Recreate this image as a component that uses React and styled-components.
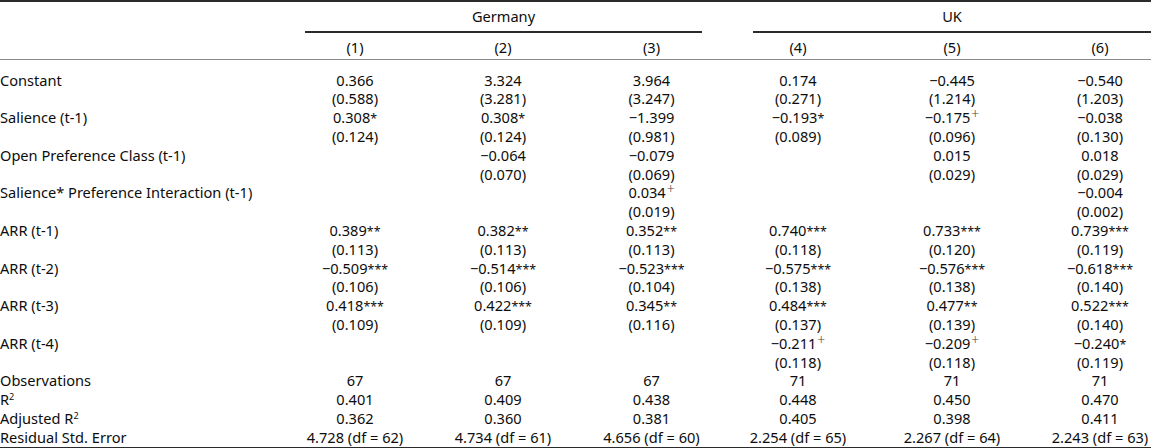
import React from 'react';
import styled, { createGlobalStyle } from 'styled-components';

const GlobalStyle = createGlobalStyle`
  html, body {
    margin: 0;
    padding: 0;
    background: #ffffff;
    overflow: hidden;
  }
  body {
    font-family: "Noto Sans", "Open Sans", sans-serif;
    font-size: 14.6px;
    color: #0d0d0d;
  }
`;

const COLS = '281px 148px 148px 149px 144px 164px 132px';
const LINE = 18.8;

const Table = styled.div`
  width: 1166px;
  border-top: 2px solid #2b2b2b;
  border-bottom: 2px solid #2b2b2b;
`;

const Row = styled.div`
  display: grid;
  grid-template-columns: ${COLS};
  line-height: ${LINE}px;
`;

const GroupRow = styled(Row)`
  padding-top: 5px;
`;

const NumberRow = styled(Row)`
  padding-top: 5px;
  padding-bottom: 2px;
  border-bottom: 1px solid #8a8a8a;
`;

const Body = styled.div`
  padding-top: 11px;
`;

const Group = styled.div`
  grid-column: ${(p) => p.$span};
  margin: 0 ${(p) => p.$right}px 0 ${(p) => p.$left}px;
  padding-bottom: 5px;
  border-bottom: 2px solid #2b2b2b;
  text-align: center;
`;

const Label = styled.div`
  height: ${LINE}px;
  white-space: nowrap;
`;

const Cell = styled.div`
  display: flex;
  flex-direction: column;
  align-items: center;
`;

const Line = styled.div`
  height: ${LINE}px;
  white-space: nowrap;
`;

const Stars = styled.span`
  font-size: 0.85em;
  line-height: 0;
`;

const Plus = styled.span`
  font-size: 0.95em;
  font-weight: 300;
  color: #444;
  line-height: 0;
  position: relative;
  top: -0.3em;
  margin-left: 1px;
`;

const Sq = styled.span`
  font-size: 0.62em;
  line-height: 0;
  position: relative;
  top: -0.6em;
`;

function Coef({ value }) {
  const [, num, stars, plus] = value.match(/^([^*+]+)(\**)(\+?)$/);
  return (
    <Line>
      {num}
      {stars && <Stars>{stars}</Stars>}
      {plus && <Plus>+</Plus>}
    </Line>
  );
}

const coefRows = [
  { label: 'Constant', cells: [['0.366', '(0.588)'], ['3.324', '(3.281)'], ['3.964', '(3.247)'], ['0.174', '(0.271)'], ['−0.445', '(1.214)'], ['−0.540', '(1.203)']] },
  { label: 'Salience (t-1)', cells: [['0.308*', '(0.124)'], ['0.308*', '(0.124)'], ['−1.399', '(0.981)'], ['−0.193*', '(0.089)'], ['−0.175+', '(0.096)'], ['−0.038', '(0.130)']] },
  { label: 'Open Preference Class (t-1)', cells: [null, ['−0.064', '(0.070)'], ['−0.079', '(0.069)'], null, ['0.015', '(0.029)'], ['0.018', '(0.029)']] },
  { label: 'Salience* Preference Interaction (t-1)', cells: [null, null, ['0.034+', '(0.019)'], null, null, ['−0.004', '(0.002)']] },
  { label: 'ARR (t-1)', cells: [['0.389**', '(0.113)'], ['0.382**', '(0.113)'], ['0.352**', '(0.113)'], ['0.740***', '(0.118)'], ['0.733***', '(0.120)'], ['0.739***', '(0.119)']] },
  { label: 'ARR (t-2)', cells: [['−0.509***', '(0.106)'], ['−0.514***', '(0.106)'], ['−0.523***', '(0.104)'], ['−0.575***', '(0.138)'], ['−0.576***', '(0.138)'], ['−0.618***', '(0.140)']] },
  { label: 'ARR (t-3)', cells: [['0.418***', '(0.109)'], ['0.422***', '(0.109)'], ['0.345**', '(0.116)'], ['0.484***', '(0.137)'], ['0.477**', '(0.139)'], ['0.522***', '(0.140)']] },
  { label: 'ARR (t-4)', cells: [null, null, null, ['−0.211+', '(0.118)'], ['−0.209+', '(0.118)'], ['−0.240*', '(0.119)']] },
];

const df = (v, n) => `${v} (df = ${n})`;

const statRows = [
  { label: 'Observations', cells: ['67', '67', '67', '71', '71', '71'] },
  { label: <>R<Sq>2</Sq></>, cells: ['0.401', '0.409', '0.438', '0.448', '0.450', '0.470'] },
  { label: <>Adjusted R<Sq>2</Sq></>, cells: ['0.362', '0.360', '0.381', '0.405', '0.398', '0.411'] },
  { label: 'Residual Std. Error', cells: [df('4.728', 62), df('4.734', 61), df('4.656', 60), df('2.254', 65), df('2.267', 64), df('2.243', 63)] },
];

export default function App() {
  return (
    <>
      <GlobalStyle />
      <Table>
        <GroupRow>
          <Group $span="2 / 5" $left={24} $right={24}>Germany</Group>
          <Group $span="5 / 8" $left={27} $right={15}>UK</Group>
        </GroupRow>
        <NumberRow>
          <Label />
          {[1, 2, 3, 4, 5, 6].map((n) => (
            <Cell key={n}><Line>({n})</Line></Cell>
          ))}
        </NumberRow>
        <Body>
          {coefRows.map((r) => (
            <Row key={r.label}>
              <Label>{r.label}</Label>
              {r.cells.map((c, i) => (
                <Cell key={i}>
                  {c ? (
                    <>
                      <Coef value={c[0]} />
                      <Line>{c[1]}</Line>
                    </>
                  ) : (
                    <>
                      <Line />
                      <Line />
                    </>
                  )}
                </Cell>
              ))}
            </Row>
          ))}
          {statRows.map((r, k) => (
            <Row key={k}>
              <Label>{r.label}</Label>
              {r.cells.map((c, i) => (
                <Cell key={i}><Line>{c}</Line></Cell>
              ))}
            </Row>
          ))}
        </Body>
      </Table>
    </>
  );
}
